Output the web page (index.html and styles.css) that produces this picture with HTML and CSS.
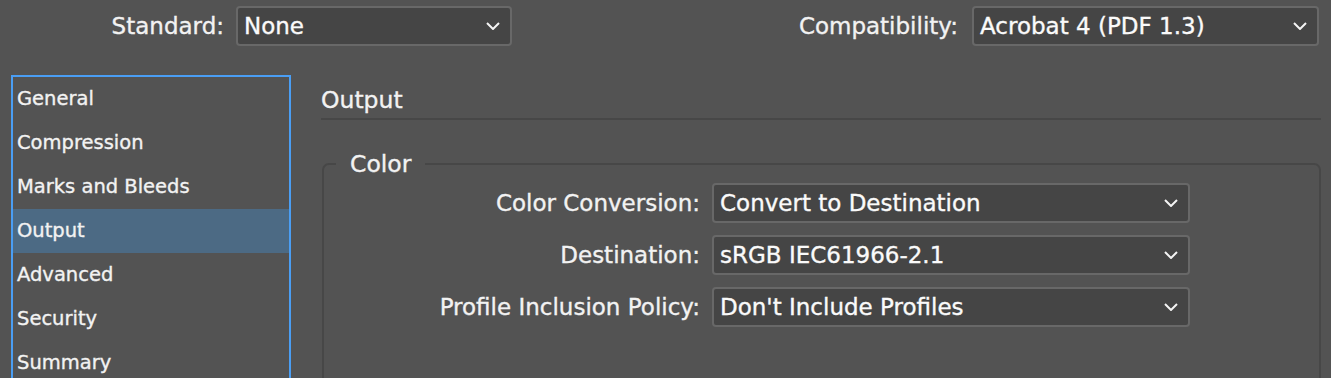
FILE: index.html
```html
<!DOCTYPE html>
<html lang="en">
<head>
    <meta charset="UTF-8">
    <meta name="viewport" content="width=device-width, initial-scale=1.0">
    <title>Export Adobe PDF - Output</title>
    <link rel="stylesheet" href="styles.css">
</head>
<body>
    <div class="topbar">
        <label class="top-label std-label">Standard:</label>
        <div class="select std-select">
            <span>None</span>
            <svg class="chevron" viewBox="0 0 14 8"><path d="M1 1 L7 7 L13 1"/></svg>
        </div>
        <label class="top-label compat-label">Compatibility:</label>
        <div class="select compat-select">
            <span>Acrobat 4 (PDF 1.3)</span>
            <svg class="chevron" viewBox="0 0 14 8"><path d="M1 1 L7 7 L13 1"/></svg>
        </div>
    </div>

    <div class="main">
        <ul class="sections">
            <li>General</li>
            <li>Compression</li>
            <li>Marks and Bleeds</li>
            <li class="selected">Output</li>
            <li>Advanced</li>
            <li>Security</li>
            <li>Summary</li>
        </ul>

        <div class="panel">
            <h2 class="panel-title">Output</h2>

            <fieldset class="group">
                <legend>Color</legend>
                <div class="row">
                    <label>Color Conversion:</label>
                    <div class="select">
                        <span>Convert to Destination</span>
                        <svg class="chevron" viewBox="0 0 14 8"><path d="M1 1 L7 7 L13 1"/></svg>
                    </div>
                </div>
                <div class="row">
                    <label>Destination:</label>
                    <div class="select">
                        <span>sRGB IEC61966-2.1</span>
                        <svg class="chevron" viewBox="0 0 14 8"><path d="M1 1 L7 7 L13 1"/></svg>
                    </div>
                </div>
                <div class="row">
                    <label>Profile Inclusion Policy:</label>
                    <div class="select">
                        <span>Don't Include Profiles</span>
                        <svg class="chevron" viewBox="0 0 14 8"><path d="M1 1 L7 7 L13 1"/></svg>
                    </div>
                </div>
            </fieldset>
        </div>
    </div>
</body>
</html>
```

FILE: styles.css
```css
* { margin: 0; padding: 0; box-sizing: border-box; }
html, body { height: 100%; overflow: hidden; }
body {
    background: #535353;
    color: #f2f2f2;
    font-family: 'DejaVu Sans', 'Liberation Sans', sans-serif;
    font-size: 23px;
    -webkit-text-stroke: 0.35px currentColor;
}

/* top row: standard + compatibility */
.topbar {
    display: flex;
    align-items: center;
    padding: 6px 12px 0 0;
}
.top-label {
    text-align: right;
    margin-right: 12px;
}
.std-label { width: 224px; }
.compat-label { margin-left: auto; margin-right: 14px; }
.std-select { width: 276px; }
.compat-select { width: 347px; }

.select {
    display: flex;
    align-items: center;
    justify-content: space-between;
    height: 40px;
    padding: 0 10px 0 6px;
    background: #454545;
    border: 2px solid #686868;
    border-radius: 4px;
    color: #fafafa;
    white-space: nowrap;
}
.chevron {
    width: 14px;
    height: 8px;
    flex-shrink: 0;
}
.chevron path {
    fill: none;
    stroke: #f4f4f4;
    stroke-width: 2;
}

/* body */
.main {
    display: flex;
    margin-top: 29px;
}
.sections {
    list-style: none;
    width: 280px;
    height: 360px;
    margin-left: 11px;
    border: 2px solid #4a9ef4;
    font-size: 19.5px;
    flex-shrink: 0;
}
.sections li {
    height: 44px;
    line-height: 44px;
    padding-left: 4px;
}
.sections li.selected { background: #4c6a84; }

.panel {
    flex: 1;
    margin-left: 30px;
    margin-right: 10px;
}
.panel-title {
    font-size: 23.5px;
    font-weight: normal;
    height: 45px;
    padding-top: 6px;
    line-height: 38px;
    border-bottom: 2px solid #474747;
}

.group {
    margin-top: 32px;
    margin-left: 1px;
    height: 260px;
    border: 2px solid #474747;
    border-radius: 7px;
    padding: 7px 0 0 0;
}
.group legend {
    margin-left: 12px;
    padding: 0 14px 0 14px;
    font-size: 23.5px;
    line-height: 24px;
}
.row {
    display: flex;
    align-items: center;
    margin-bottom: 12px;
}
.row label {
    width: 376px;
    text-align: right;
    margin-right: 12px;
}
.row .select { width: 478px; }
```
